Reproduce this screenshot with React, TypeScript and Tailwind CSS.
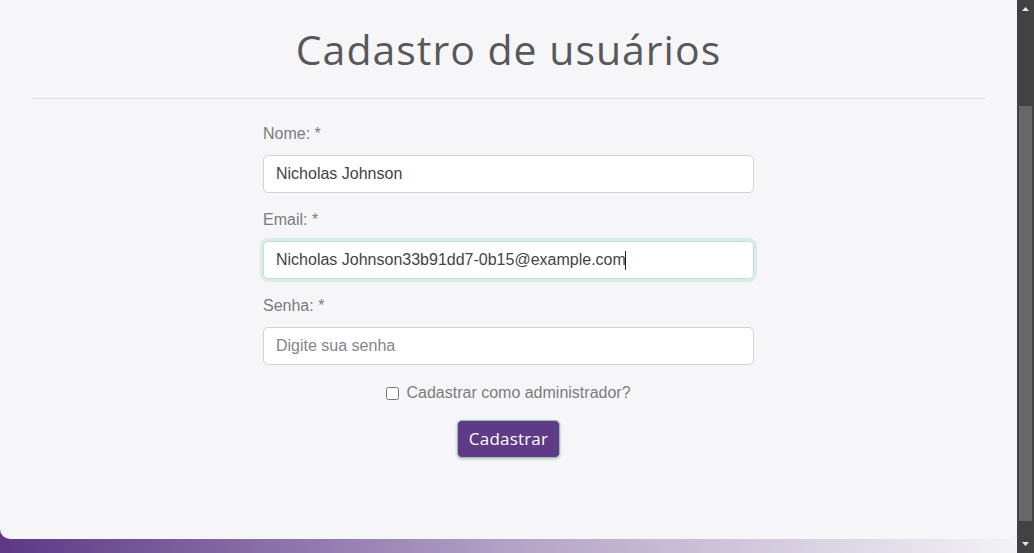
const sans = "font-['Liberation_Sans',Arial,sans-serif]";
const display = "font-['Open_Sans','Noto_Sans',sans-serif]";

function Field({
  label,
  children,
}: {
  label: string;
  children: React.ReactNode;
}) {
  return (
    <div className="flex flex-col">
      <label className={`${sans} text-base leading-6 text-[#7b7b7d] mb-[9px]`}>{label}</label>
      {children}
    </div>
  );
}

// window scrollbar, page is scrolled to the bottom
function Scrollbar() {
  return (
    <div className="flex h-full w-[17px] shrink-0 flex-col items-center bg-[#424242]">
      <svg width="9" height="17" viewBox="0 0 9 17" className="shrink-0">
        <path d="M1 11 L4.5 7 L8 11 Z" fill="#e8e8e8" />
      </svg>
      <div className="mt-[89px] h-[415px] w-[13px] bg-[#686868]" />
      <div className="flex-1" />
      <svg width="9" height="17" viewBox="0 0 9 17" className="shrink-0">
        <path d="M1 6 L8 6 L4.5 10 Z" fill="#e8e8e8" />
      </svg>
    </div>
  );
}

export default function App() {
  const inputBase = `${sans} h-[38px] w-full rounded-[5px] border bg-white px-3 text-base text-[#444446] outline-none placeholder:text-[#858589]`;

  return (
    <div className="flex h-screen overflow-hidden">
      <div className="flex min-w-0 flex-1 flex-col bg-gradient-to-r from-[#5e3886] via-[#b3a2c6] to-[#f3f3f5]">
        <div className="flex-1 rounded-b-[10px] bg-[#f6f6f9] pt-[25px]">
          <h1 className={`${display} text-center text-[41px] leading-[48px] tracking-[1px] text-[#58585a]`}>
            Cadastro de usuários
          </h1>
          <div className="mx-[32px] mt-[25px] border-t border-[#dcdcdf]" />

          <form className="mx-auto mt-[23px] flex w-[491px] flex-col gap-[15px]">
            <Field label="Nome: *">
              <input
                className={`${inputBase} border-[#d2d2d8]`}
                defaultValue="Nicholas Johnson"
              />
            </Field>
            <Field label="Email: *">
              <div className="relative">
                <input
                  className={`${inputBase} border-[#bfe0d6] ring-[3px] ring-[#d9ede6]`}
                  defaultValue="Nicholas Johnson33b91dd7-0b15@example.com"
                />
                {/* text caret */}
                <span className="pointer-events-none absolute left-[362px] top-[10px] h-[19px] w-px bg-[#222]" />
              </div>
            </Field>
            <Field label="Senha: *">
              <input
                type="password"
                className={`${inputBase} border-[#d2d2d8]`}
                placeholder="Digite sua senha"
              />
            </Field>

            <label className={`${sans} mt-px flex items-center justify-center gap-[7px] text-base leading-6 text-[#7b7b7d]`}>
              <input type="checkbox" className="m-0 h-[13px] w-[13px]" />
              Cadastrar como administrador?
            </label>

            <div className="flex justify-center">
              <button
                type="button"
                className={`${display} h-[38px] w-[103px] rounded-[5px] border border-[#8fc5b8] bg-[#5f3a87] text-[17px] tracking-[0.2px] text-white shadow-[0_1px_3px_rgba(0,0,0,0.25)]`}
              >
                Cadastrar
              </button>
            </div>
          </form>
        </div>
        <div className="h-[14px] shrink-0" />
      </div>
      <Scrollbar />
    </div>
  );
}
